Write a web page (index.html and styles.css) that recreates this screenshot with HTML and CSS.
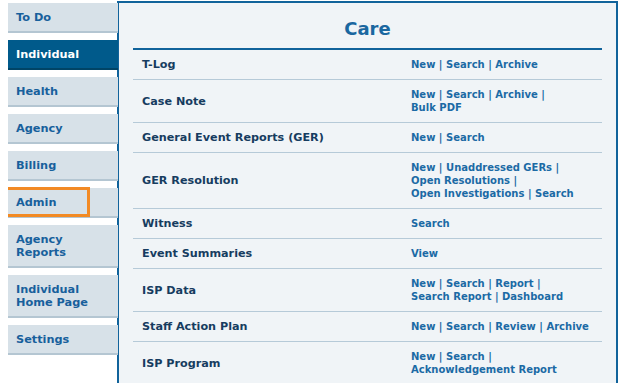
FILE: index.html
```html
<!DOCTYPE html>
<html lang="en">
<head>
    <meta charset="UTF-8">
    <title>Care</title>
    <link rel="stylesheet" href="styles.css">
</head>
<body>
    <div class="layout">
        <ul class="sidenav">
            <li class="nav-item">To Do</li>
            <li class="nav-item active">Individual</li>
            <li class="nav-item">Health</li>
            <li class="nav-item">Agency</li>
            <li class="nav-item">Billing</li>
            <li class="nav-item highlighted">Admin<span class="mark"></span></li>
            <li class="nav-item">Agency<br>Reports</li>
            <li class="nav-item">Individual<br>Home Page</li>
            <li class="nav-item">Settings</li>
        </ul>

        <div class="panel">
            <h2 class="panel-title">Care</h2>
            <div class="menu">
                <div class="menu-row">
                    <div class="menu-label">T-Log</div>
                    <div class="menu-links"><a href="#">New</a> | <a href="#">Search</a> | <a href="#">Archive</a></div>
                </div>
                <div class="menu-row">
                    <div class="menu-label">Case Note</div>
                    <div class="menu-links"><a href="#">New</a> | <a href="#">Search</a> | <a href="#">Archive</a> |<br><a href="#">Bulk PDF</a></div>
                </div>
                <div class="menu-row">
                    <div class="menu-label">General Event Reports (GER)</div>
                    <div class="menu-links"><a href="#">New</a> | <a href="#">Search</a></div>
                </div>
                <div class="menu-row">
                    <div class="menu-label">GER Resolution</div>
                    <div class="menu-links"><a href="#">New</a> | <a href="#">Unaddressed GERs</a> |<br><a href="#">Open Resolutions</a> |<br><a href="#">Open Investigations</a> | <a href="#">Search</a></div>
                </div>
                <div class="menu-row">
                    <div class="menu-label">Witness</div>
                    <div class="menu-links"><a href="#">Search</a></div>
                </div>
                <div class="menu-row">
                    <div class="menu-label">Event Summaries</div>
                    <div class="menu-links"><a href="#">View</a></div>
                </div>
                <div class="menu-row">
                    <div class="menu-label">ISP Data</div>
                    <div class="menu-links"><a href="#">New</a> | <a href="#">Search</a> | <a href="#">Report</a> |<br><a href="#">Search Report</a> | <a href="#">Dashboard</a></div>
                </div>
                <div class="menu-row">
                    <div class="menu-label">Staff Action Plan</div>
                    <div class="menu-links"><a href="#">New</a> | <a href="#">Search</a> | <a href="#">Review</a> | <a href="#">Archive</a></div>
                </div>
                <div class="menu-row">
                    <div class="menu-label">ISP Program</div>
                    <div class="menu-links"><a href="#">New</a> | <a href="#">Search</a> |<br><a href="#">Acknowledgement Report</a></div>
                </div>
            </div>
        </div>
    </div>
</body>
</html>
```

FILE: styles.css
```css
body {
    font-family: "DejaVu Sans", Verdana, sans-serif;
    font-weight: bold;
    background-color: #fff;
    margin: 0 0 0 8px;
    padding-top: 1px;
    overflow: hidden;
}

.layout {
    display: flex;
    align-items: flex-start;
}

.sidenav {
    list-style: none;
    margin: 2px 0 0;
    padding: 0;
    width: 110px;
    flex-shrink: 0;
}

.nav-item {
    position: relative;
    background-color: #d7e1e8;
    border-bottom: 2px solid #b4c6d2;
    color: #17609c;
    font-size: 11.3px;
    line-height: 13px;
    padding: 8px 8px 7px;
    margin-bottom: 7px;
}

.nav-item.active {
    background-color: #005a8b;
    border-bottom-color: #004466;
    color: #fff;
}

.mark {
    position: absolute;
    left: -4px;
    top: -1px;
    width: 80px;
    height: 24px;
    border: 3px solid #f28a24;
}

.panel {
    flex: 1;
    margin-left: -1px;
    margin-right: 2px;
    background-color: #f0f4f7;
    border: 2px solid #11639b;
    padding: 0 14px 40px;
}

.panel-title {
    margin: 0;
    padding: 15px 0 8px;
    font-size: 18px;
    line-height: 22px;
    text-align: center;
    color: #1a67a0;
    border-bottom: 2px solid #11639b;
}

.menu-row {
    display: grid;
    grid-template-columns: 278px 1fr;
    align-items: center;
    border-bottom: 1px solid #b6cad8;
    padding: 8px 0;
}

.menu-label {
    padding-left: 9px;
    font-size: 11.2px;
    line-height: 13px;
    color: #163c60;
}

.menu-links {
    font-size: 10px;
    line-height: 13px;
    color: #1b6aa5;
}

.menu-links a {
    color: #1b6aa5;
    text-decoration: none;
}
```
